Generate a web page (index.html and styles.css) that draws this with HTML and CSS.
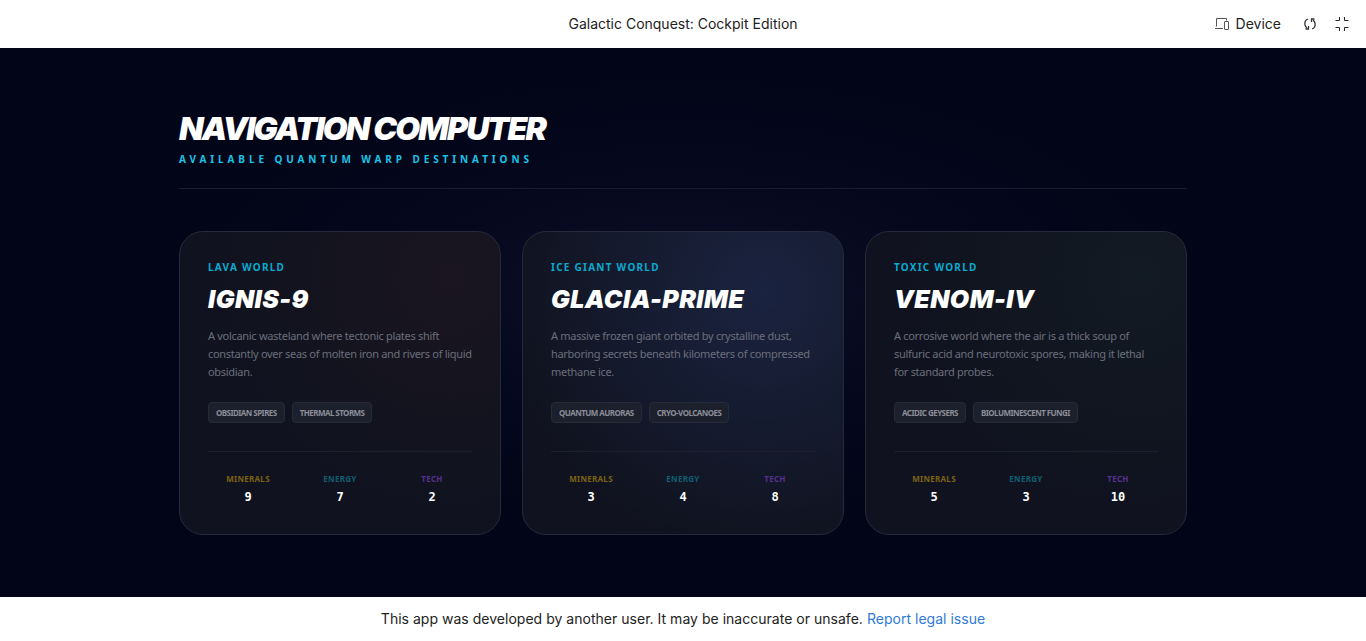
FILE: index.html
```html
<!DOCTYPE html>
<html>
<head>
    <title>Galactic Conquest: Cockpit Edition</title>
    <link rel="stylesheet" href="styles.css">
</head>
<body>
    <div class="topbar">
        <div class="topbar-title">Galactic Conquest: Cockpit Edition</div>
        <div class="topbar-actions">
            <span class="device">
                <svg class="icon" viewBox="0 0 16 16" width="16" height="16" fill="none" stroke="#555" stroke-width="1">
                    <path d="M2.5 10.500V2.500h10v2"/>
                    <path d="M1 12.500h8"/>
                    <rect x="10.500" y="5.500" width="4" height="8" rx=".5"/>
                </svg>
                <span class="device-label">Device</span>
            </span>
            <svg class="icon" viewBox="0 0 16 16" width="16" height="16" fill="none" stroke="#333" stroke-width="1.300">
                <path d="M6 3C3.500 4 2.500 6.500 3 9c.3 1.200 1 2.200 2 3"/>
                <path d="M3.500 13H6.500v-3"/>
                <path d="M10 13c2.500-1 3.500-3.500 3-6-.3-1.200-1-2.200-2-3"/>
                <path d="M12.500 3H9.500v3"/>
            </svg>
            <svg class="icon" viewBox="0 0 16 16" width="16" height="16" fill="none" stroke="#222" stroke-width="1">
                <path d="M5.500 1v3.500h-4"/>
                <path d="M10.500 1v3.500h4"/>
                <path d="M5.500 15v-3.500h-4"/>
                <path d="M10.500 15v-3.500h4"/>
            </svg>
        </div>
    </div>

    <main class="screen">
        <div class="content">
            <header class="nav-header">
                <h1>NAVIGATION COMPUTER</h1>
                <p>AVAILABLE QUANTUM WARP DESTINATIONS</p>
            </header>

            <div class="cards">
                <section class="card card-lava">
                    <div class="world-type">LAVA WORLD</div>
                    <h2>IGNIS-9</h2>
                    <p class="desc">A volcanic wasteland where tectonic plates shift constantly over seas of molten iron and rivers of liquid obsidian.</p>
                    <div class="tags">
                        <span class="tag">OBSIDIAN SPIRES</span>
                        <span class="tag">THERMAL STORMS</span>
                    </div>
                    <div class="stats">
                        <div class="stat"><span class="stat-label minerals">MINERALS</span><span class="stat-value">9</span></div>
                        <div class="stat"><span class="stat-label energy">ENERGY</span><span class="stat-value">7</span></div>
                        <div class="stat"><span class="stat-label tech">TECH</span><span class="stat-value">2</span></div>
                    </div>
                </section>

                <section class="card card-ice">
                    <div class="world-type">ICE GIANT WORLD</div>
                    <h2>GLACIA-PRIME</h2>
                    <p class="desc">A massive frozen giant orbited by crystalline dust, harboring secrets beneath kilometers of compressed methane ice.</p>
                    <div class="tags">
                        <span class="tag">QUANTUM AURORAS</span>
                        <span class="tag">CRYO-VOLCANOES</span>
                    </div>
                    <div class="stats">
                        <div class="stat"><span class="stat-label minerals">MINERALS</span><span class="stat-value">3</span></div>
                        <div class="stat"><span class="stat-label energy">ENERGY</span><span class="stat-value">4</span></div>
                        <div class="stat"><span class="stat-label tech">TECH</span><span class="stat-value">8</span></div>
                    </div>
                </section>

                <section class="card card-toxic">
                    <div class="world-type">TOXIC WORLD</div>
                    <h2>VENOM-IV</h2>
                    <p class="desc">A corrosive world where the air is a thick soup of sulfuric acid and neurotoxic spores, making it lethal for standard probes.</p>
                    <div class="tags">
                        <span class="tag">ACIDIC GEYSERS</span>
                        <span class="tag">BIOLUMINESCENT FUNGI</span>
                    </div>
                    <div class="stats">
                        <div class="stat"><span class="stat-label minerals">MINERALS</span><span class="stat-value">5</span></div>
                        <div class="stat"><span class="stat-label energy">ENERGY</span><span class="stat-value">3</span></div>
                        <div class="stat"><span class="stat-label tech">TECH</span><span class="stat-value">10</span></div>
                    </div>
                </section>
            </div>
        </div>
    </main>

    <div class="bottombar">
        This app was developed by another user. It may be inaccurate or unsafe.
        <a href="#">Report legal issue</a>
    </div>
</body>
</html>
```

FILE: styles.css
```css
* {
    box-sizing: border-box;
}

body {
    margin: 0;
    height: 641px;
    overflow: hidden;
    display: flex;
    flex-direction: column;
    font-family: "Noto Sans", sans-serif;
    background-color: #fff;
}

.topbar {
    height: 48px;
    flex: none;
    display: flex;
    align-items: center;
    justify-content: center;
    position: relative;
    background-color: #fff;
    font-family: "Inter", sans-serif;
    font-size: 14px;
    color: #222;
}

.topbar-title,
.device-label {
    margin-bottom: 2px;
}

.topbar-actions {
    position: absolute;
    top: 0;
    right: 16px;
    height: 48px;
    display: flex;
    align-items: center;
    gap: 16px;
}

.device {
    display: flex;
    align-items: center;
    gap: 6px;
    margin-right: 5px;
}

.icon {
    display: block;
}

.screen {
    flex: 1;
    background-color: #020417;
    background-image: radial-gradient(ellipse at 50% 45%, #0a0e25 0%, #030519 45%, #010316 100%);
}

.content {
    width: 1008px;
    margin: 0 auto;
    padding-top: 62px;
}

.nav-header {
    padding-bottom: 22px;
    border-bottom: 1px solid #1a1d2e;
    margin-bottom: 42px;
}

.nav-header h1 {
    margin: 0;
    font-family: "Inter", sans-serif;
    font-size: 32px;
    line-height: 38px;
    font-weight: 900;
    font-style: italic;
    letter-spacing: -1.850px;
    color: #fff;
}

.nav-header p {
    margin: 4px 0 0;
    font-size: 10px;
    line-height: 14px;
    font-weight: 700;
    letter-spacing: 3.900px;
    color: #1ac3e6;
}

.cards {
    display: grid;
    grid-template-columns: repeat(3, 1fr);
    gap: 21px;
}

.card {
    height: 304px;
    padding: 28px;
    border: 1px solid #26293a;
    border-radius: 24px;
    background-color: #10131f;
}

.card-lava {
    background-image: radial-gradient(circle at 85% 15%, #1a1520 0%, rgba(26, 21, 32, 0) 60%);
}

.card-ice {
    background-image: radial-gradient(circle at 75% 20%, #1a2340 0%, rgba(26, 35, 64, 0) 75%);
}

.card-toxic {
    background-image: radial-gradient(circle at 85% 15%, #121a23 0%, rgba(18, 26, 35, 0) 60%);
}

.world-type {
    font-size: 10px;
    line-height: 14px;
    font-weight: 700;
    letter-spacing: 1.250px;
    color: #0ba9cf;
}

.card h2 {
    margin: 9px 0 0;
    font-family: "Inter", sans-serif;
    font-size: 25px;
    line-height: 33px;
    font-weight: 900;
    font-style: italic;
    letter-spacing: .4px;
    color: #fff;
}

.desc {
    margin: 11px 0 0;
    font-size: 11px;
    line-height: 18px;
    letter-spacing: -.3px;
    color: #6b6e7b;
}

.tags {
    display: flex;
    gap: 7px;
    margin-top: 21px;
}

.tag {
    height: 21px;
    padding: 0 7px;
    display: flex;
    align-items: center;
    font-size: 8px;
    font-weight: 700;
    letter-spacing: -.55px;
    color: #8b8d98;
    background-color: #1c1f2c;
    border: 1px solid #272a38;
    border-radius: 4px;
}

.stats {
    display: grid;
    grid-template-columns: repeat(3, 1fr);
    gap: 12px;
    margin-top: 28px;
    padding-top: 20px;
    border-top: 1px solid #1c1f2d;
    text-align: center;
}

.stat {
    display: flex;
    flex-direction: column;
    align-items: center;
}

.stat-label {
    font-size: 8px;
    line-height: 14px;
    font-weight: 700;
    letter-spacing: .3px;
}

.minerals {
    color: #7c6312;
}

.energy {
    color: #0f5f72;
}

.tech {
    color: #56308e;
}

.stat-value {
    margin-top: 4px;
    font-family: "DejaVu Sans Mono", monospace;
    font-size: 12px;
    line-height: 15px;
    font-weight: 700;
    color: #fff;
}

.bottombar {
    height: 44px;
    flex: none;
    padding-bottom: 2px;
    display: flex;
    align-items: center;
    justify-content: center;
    gap: 4px;
    background-color: #fff;
    font-family: "Inter", sans-serif;
    font-size: 14px;
    letter-spacing: .02px;
    color: #222;
}

.bottombar a {
    color: #2f7bd6;
    text-decoration: none;
}
```
